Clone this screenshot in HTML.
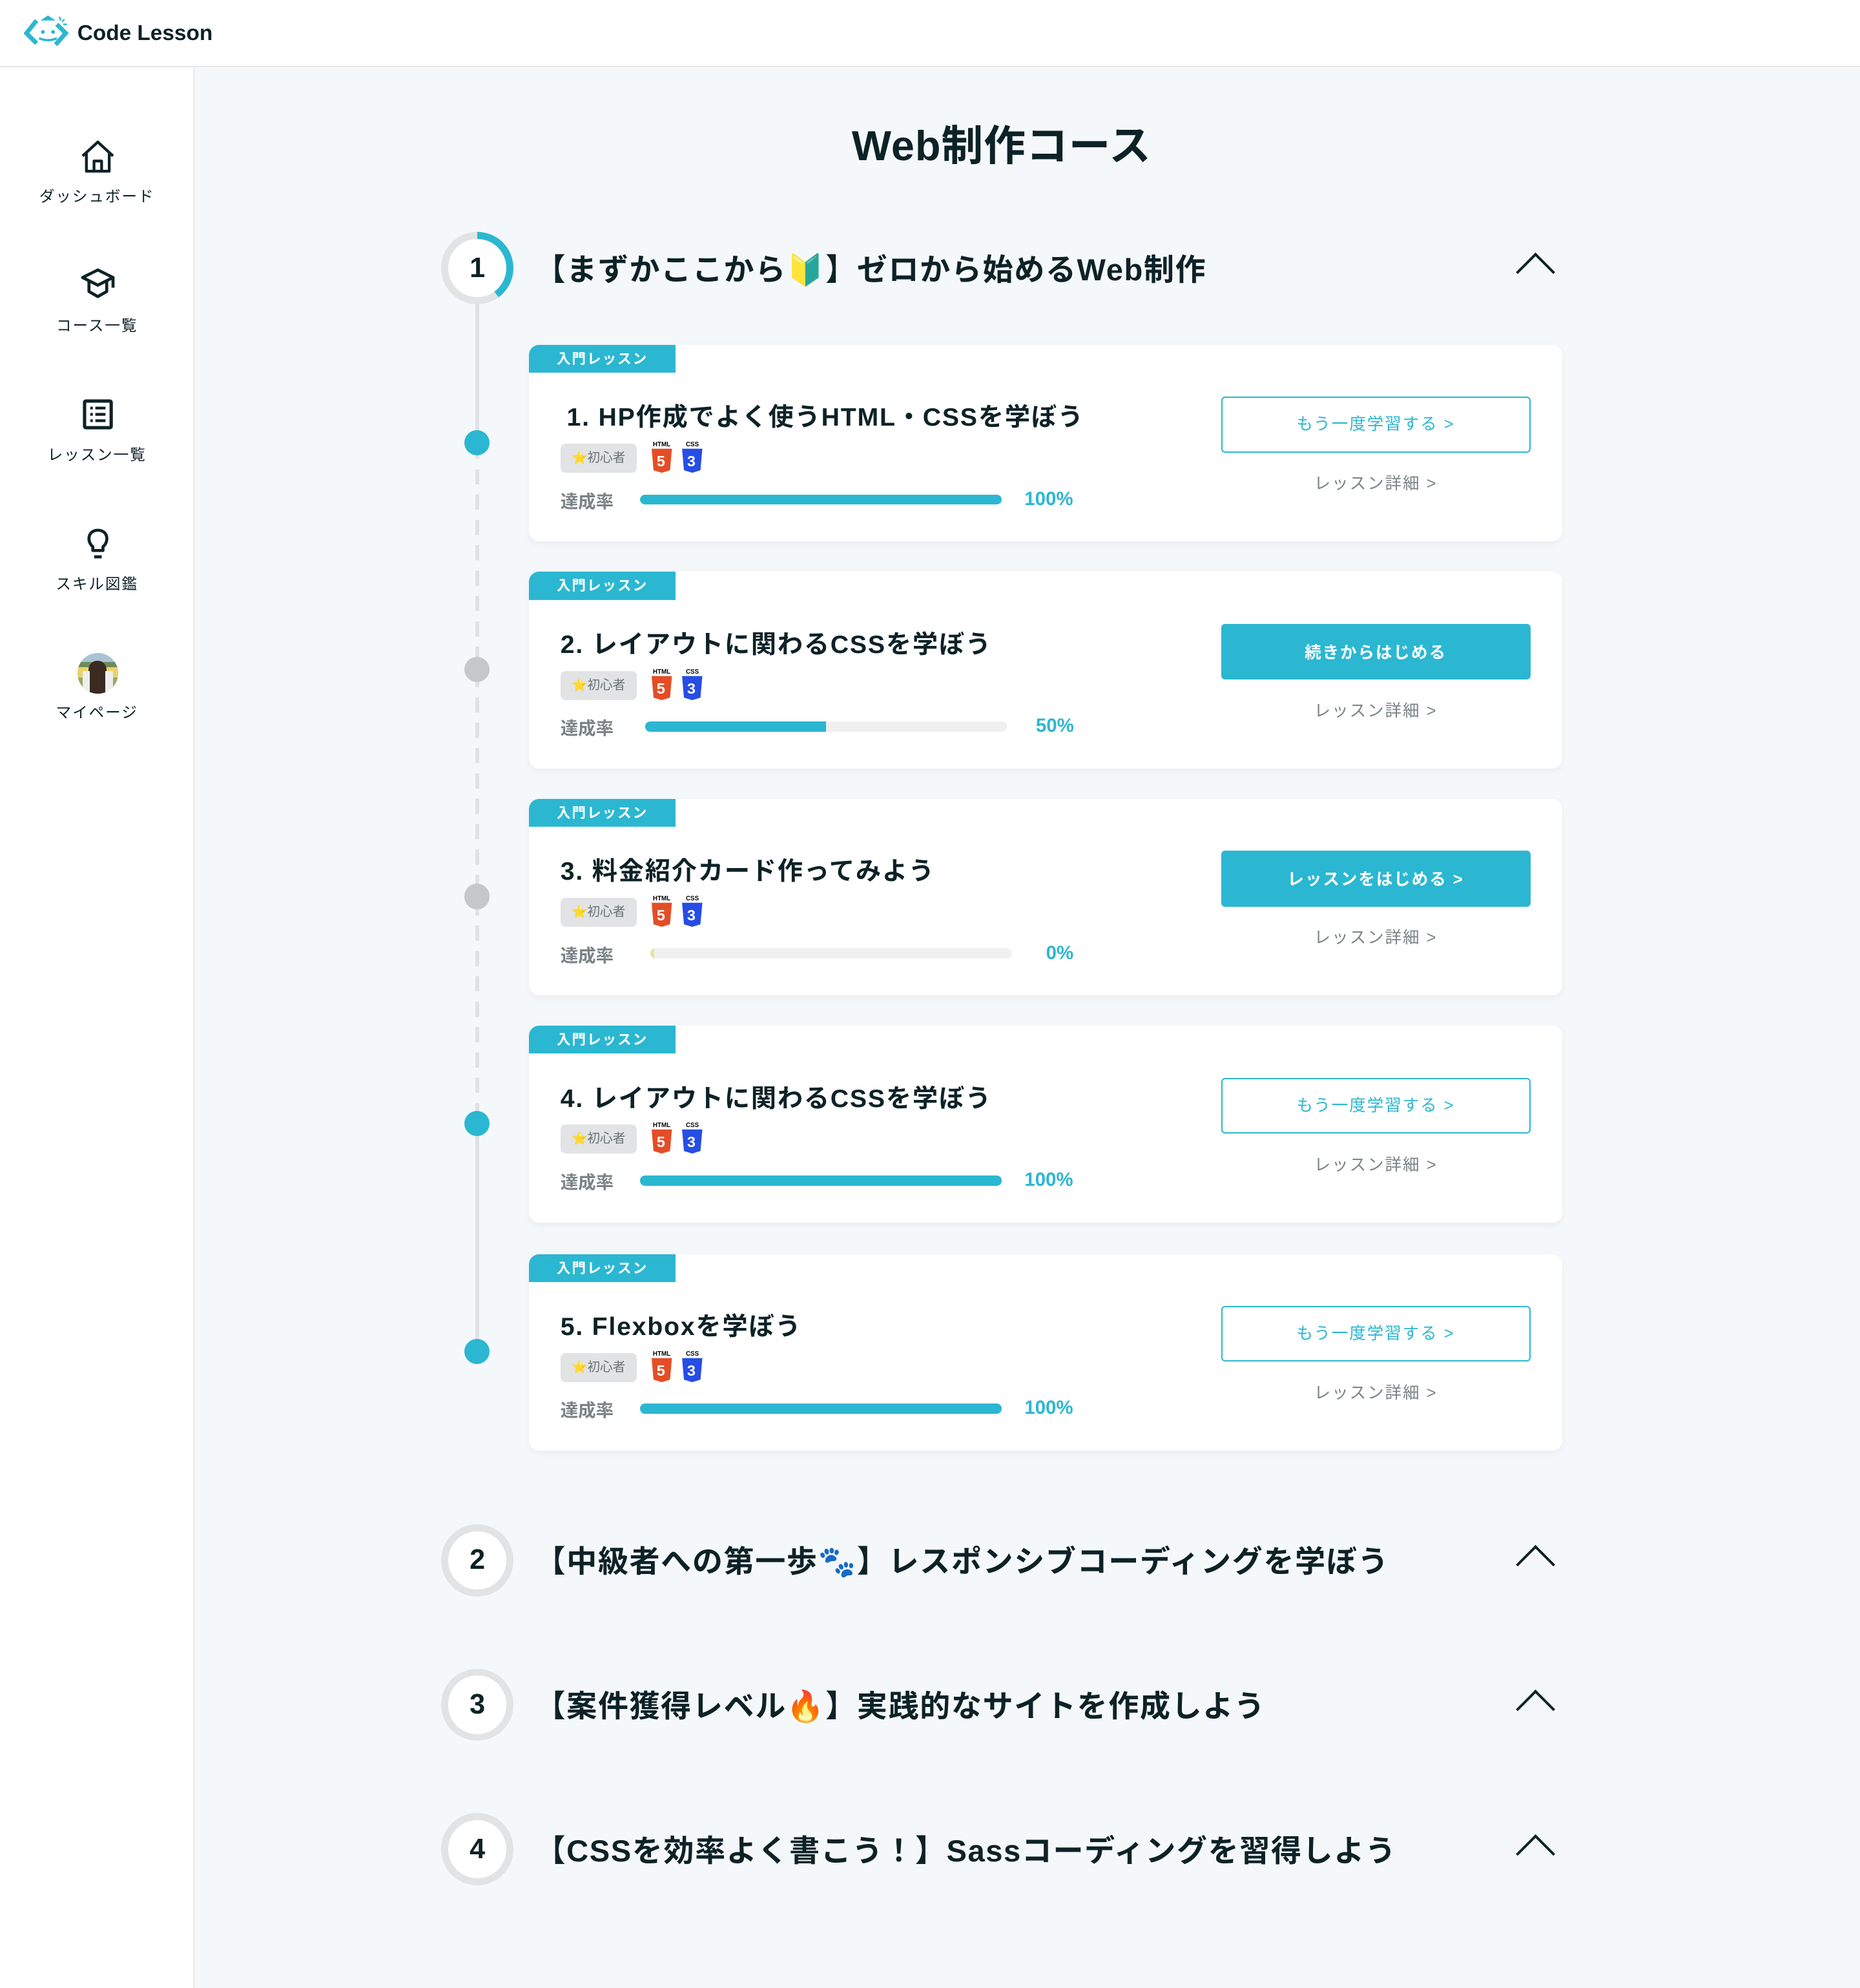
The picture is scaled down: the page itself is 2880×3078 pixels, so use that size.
<!DOCTYPE html>
<html><head><meta charset="utf-8"><style>
*{margin:0;padding:0;box-sizing:border-box}
html,body{width:2880px;height:3078px;overflow:hidden;background:#f5f8fb}
#w{zoom:1.96319;width:1467px;height:1568px;position:relative;font-family:"Liberation Sans","Noto Sans CJK JP",sans-serif;color:#0d2227;background:#f5f8fb}
.a{position:absolute}
.hdr{left:0;top:0;width:1467px;height:53px;background:#fff;border-bottom:1.5px solid #e6e8ea}
.side{left:0;top:53px;width:154px;height:1515px;background:#fff;border-right:2px solid #eceef0}
.nav{position:absolute;left:0;width:153px;text-align:center;font-size:12px;letter-spacing:1px;color:#0d2227}
.ring{width:57px;height:57px;border-radius:50%;background:#e1e3e4;display:flex;align-items:center;justify-content:center}
.ring>div{width:46px;height:46px;border-radius:50%;background:#fff;display:flex;align-items:center;justify-content:center;font-weight:bold;font-size:22px}
.st{font-size:24px;font-weight:bold;letter-spacing:0.8px;white-space:nowrap}
.chev{width:22px;height:22px;border-left:2.5px solid #0d2227;border-top:2.5px solid #0d2227;transform:rotate(45deg)}
.card{left:417px;width:815px;height:155px;background:#fff;border-radius:8px;box-shadow:0 2px 6px rgba(0,0,0,.05)}
.tag{left:0;top:0;width:116px;height:22px;background:#2bb7d1;color:#fff;font-size:11px;font-weight:bold;text-align:center;line-height:22px;border-radius:8px 0 0 0;letter-spacing:1px}
.ct{left:25px;top:41px;font-size:20px;font-weight:bold;letter-spacing:0.9px;white-space:nowrap}
.bdg{left:25px;top:78px;width:60px;height:23px;background:#e1e3e4;border-radius:4px;font-size:10px;color:#6a7274;line-height:23px;text-align:center}
.lb{left:25px;top:112px;font-size:14px;color:#7a8385;font-weight:bold}
.bar{top:118px;height:8px;width:285px;background:#f0f0f0;border-radius:4px;overflow:hidden}
.bar i{display:block;height:8px;background:#2bb7d1}
.pc{top:113px;font-size:15px;color:#2bb7d1;font-weight:bold}
.btn{left:546px;top:41px;width:244px;height:44px;border-radius:3px;font-size:13px;text-align:center;line-height:42px;letter-spacing:1px}
.b1{border:1.5px solid #2bb7d1;color:#2bb7d1;background:#fff}
.b2{background:#2bb7d1;color:#fff;font-weight:bold;line-height:46px}
.det{left:546px;width:244px;top:99px;text-align:center;font-size:13px;color:#7a8385;letter-spacing:1px}
.dot{width:20px;height:20px;border-radius:50%;left:366px}
</style></head><body><div id="w">
<div class="a hdr"></div>
<svg class="a" style="left:19px;top:10px" width="38" height="32" viewBox="0 0 38 32">
<path d="M10 6 L2 16 L10 24" fill="none" stroke="#2bb7d1" stroke-width="3.5"/>
<path d="M26 9 L33 16 L25 25" fill="none" stroke="#2bb7d1" stroke-width="3.5"/>
<path d="M13 6 L19 2 L25 6 Z" fill="#2bb7d1"/>
<circle cx="15" cy="15" r="1.5" fill="#2bb7d1"/><circle cx="23" cy="15" r="1.5" fill="#2bb7d1"/>
<path d="M12 20 Q19 23 26 20" fill="none" stroke="#2bb7d1" stroke-width="1.8"/>
<path d="M28 3 L29 6 M32 5 L30 7 M34 9 L31 9" stroke="#2bb7d1" stroke-width="1.2"/>
</svg>
<div class="a" style="left:61px;top:17px;font-size:17px;font-weight:bold">Code Lesson</div>
<div class="a side"></div>
<svg class="a" style="left:62px;top:109px" width="30" height="30" viewBox="0 0 30 30"><path d="M3 14 L15 3 L27 14 M6 12 V26 H24 V12 M12 26 V18 H18 V26" fill="none" stroke="#0d2227" stroke-width="2.2" stroke-linejoin="round"/></svg>
<div class="nav" style="top:145px">ダッシュボード</div>
<svg class="a" style="left:63px;top:211px" width="28" height="26" viewBox="0 0 28 26"><path d="M2 8 L14 2 L26 8 L14 14 Z M7 11 V19 L14 23 L21 19 V11 M26 8 V16" fill="none" stroke="#0d2227" stroke-width="2.4" stroke-linejoin="round"/></svg>
<div class="nav" style="top:247px">コース一覧</div>
<svg class="a" style="left:65px;top:315px" width="24" height="24" viewBox="0 0 24 24"><rect x="1.5" y="1.5" width="21" height="21" rx="1" fill="none" stroke="#0d2227" stroke-width="2.6"/><path d="M6 7h2M10 7h8M6 12h2M10 12h8M6 17h2M10 17h8" stroke="#0d2227" stroke-width="2.2"/></svg>
<div class="nav" style="top:349px">レッスン一覧</div>
<svg class="a" style="left:66px;top:416px" width="22" height="26" viewBox="0 0 22 26"><path d="M7 18 V15 C2 11 3 2 11 2 C19 2 20 11 15 15 V18 Z" fill="none" stroke="#0d2227" stroke-width="2.4" stroke-linejoin="round"/><path d="M8 23 H14" stroke="#0d2227" stroke-width="2.4"/></svg>
<div class="nav" style="top:451px">スキル図鑑</div>
<div class="a" style="left:61px;top:515px;width:32px;height:32px;border-radius:50%;overflow:hidden;background:linear-gradient(#a9c3d3 0 22%,#6e8a5a 22% 35%,#e8d36a 35% 60%,#9aa86a 60%)"><div class="a" style="left:9px;top:6px;width:14px;height:26px;border-radius:7px 7px 2px 2px;background:#3a2a20"></div><div class="a" style="left:4px;top:14px;width:6px;height:18px;background:#eee"></div><div class="a" style="left:22px;top:14px;width:6px;height:18px;background:#eee"></div></div>
<div class="nav" style="top:552px">マイページ</div>

<div class="a" style="left:0;width:1580px;top:88px;text-align:center;font-size:33px;font-weight:bold;letter-spacing:0.5px">Web制作コース</div>

<div class="a" style="left:375px;top:236px;width:3px;height:114px;background:#dfe1e2"></div>
<div class="a" style="left:375px;top:350px;width:3px;height:536px;background:repeating-linear-gradient(#dfe1e2 0 12px,transparent 12px 20px)"></div>
<div class="a" style="left:375px;top:886px;width:3px;height:180px;background:#dfe1e2"></div>
<div class="a dot" style="top:339px;background:#2bb7d1"></div>
<div class="a dot" style="top:518px;background:#c5c8c9"></div>
<div class="a dot" style="top:697px;background:#c5c8c9"></div>
<div class="a dot" style="top:876px;background:#2bb7d1"></div>
<div class="a dot" style="top:1056px;background:#2bb7d1"></div>

<div class="a ring" style="left:348px;top:183px;background:conic-gradient(#2bb7d1 0 40%,#e1e3e4 40%)"><div>1</div></div>
<div class="a st" style="left:422px;top:193px">【まずかここから🔰】ゼロから始めるWeb制作</div>
<div class="a chev" style="left:1200px;top:204px"></div>

<div class="a card" style="top:272px"><div class="a tag">入門レッスン</div><div class="a ct" style="left:30px">1. HP作成でよく使うHTML・CSSを学ぼう</div><div class="a bdg">⭐初心者</div>
<svg class="a" style="left:96px;top:75px" width="46" height="28"><text x="2" y="5" font-size="5" font-weight="bold" font-family="Liberation Sans">HTML</text><path d="M1 7h16l-1.5 17-6.5 2-6.5-2z" fill="#e44d26"/><text x="5" y="21" font-size="12" font-weight="bold" fill="#fff" font-family="Liberation Sans">5</text><text x="28" y="5" font-size="5" font-weight="bold" font-family="Liberation Sans">CSS</text><path d="M25 7h16l-1.5 17-6.5 2-6.5-2z" fill="#264de4"/><text x="29" y="21" font-size="12" font-weight="bold" fill="#fff" font-family="Liberation Sans">3</text></svg>
<div class="a lb">達成率</div><div class="a bar" style="left:88px"><i style="width:100%"></i></div><div class="a pc" style="left:391px">100%</div>
<div class="a btn b1">もう一度学習する ></div><div class="a det">レッスン詳細 ></div></div>

<div class="a card" style="top:451px"><div class="a tag">入門レッスン</div><div class="a ct">2. レイアウトに関わるCSSを学ぼう</div><div class="a bdg">⭐初心者</div>
<svg class="a" style="left:96px;top:75px" width="46" height="28"><text x="2" y="5" font-size="5" font-weight="bold" font-family="Liberation Sans">HTML</text><path d="M1 7h16l-1.5 17-6.5 2-6.5-2z" fill="#e44d26"/><text x="5" y="21" font-size="12" font-weight="bold" fill="#fff" font-family="Liberation Sans">5</text><text x="28" y="5" font-size="5" font-weight="bold" font-family="Liberation Sans">CSS</text><path d="M25 7h16l-1.5 17-6.5 2-6.5-2z" fill="#264de4"/><text x="29" y="21" font-size="12" font-weight="bold" fill="#fff" font-family="Liberation Sans">3</text></svg>
<div class="a lb">達成率</div><div class="a bar" style="left:92px"><i style="width:50%"></i></div><div class="a pc" style="left:400px">50%</div>
<div class="a btn b2">続きからはじめる</div><div class="a det">レッスン詳細 ></div></div>

<div class="a card" style="top:630px"><div class="a tag">入門レッスン</div><div class="a ct">3. 料金紹介カード作ってみよう</div><div class="a bdg">⭐初心者</div>
<svg class="a" style="left:96px;top:75px" width="46" height="28"><text x="2" y="5" font-size="5" font-weight="bold" font-family="Liberation Sans">HTML</text><path d="M1 7h16l-1.5 17-6.5 2-6.5-2z" fill="#e44d26"/><text x="5" y="21" font-size="12" font-weight="bold" fill="#fff" font-family="Liberation Sans">5</text><text x="28" y="5" font-size="5" font-weight="bold" font-family="Liberation Sans">CSS</text><path d="M25 7h16l-1.5 17-6.5 2-6.5-2z" fill="#264de4"/><text x="29" y="21" font-size="12" font-weight="bold" fill="#fff" font-family="Liberation Sans">3</text></svg>
<div class="a lb">達成率</div><div class="a bar" style="left:96px"><i style="width:1%;background:#e8e2a0"></i></div><div class="a pc" style="left:408px">0%</div>
<div class="a btn b2">レッスンをはじめる ></div><div class="a det">レッスン詳細 ></div></div>

<div class="a card" style="top:809px"><div class="a tag">入門レッスン</div><div class="a ct">4. レイアウトに関わるCSSを学ぼう</div><div class="a bdg">⭐初心者</div>
<svg class="a" style="left:96px;top:75px" width="46" height="28"><text x="2" y="5" font-size="5" font-weight="bold" font-family="Liberation Sans">HTML</text><path d="M1 7h16l-1.5 17-6.5 2-6.5-2z" fill="#e44d26"/><text x="5" y="21" font-size="12" font-weight="bold" fill="#fff" font-family="Liberation Sans">5</text><text x="28" y="5" font-size="5" font-weight="bold" font-family="Liberation Sans">CSS</text><path d="M25 7h16l-1.5 17-6.5 2-6.5-2z" fill="#264de4"/><text x="29" y="21" font-size="12" font-weight="bold" fill="#fff" font-family="Liberation Sans">3</text></svg>
<div class="a lb">達成率</div><div class="a bar" style="left:88px"><i style="width:100%"></i></div><div class="a pc" style="left:391px">100%</div>
<div class="a btn b1">もう一度学習する ></div><div class="a det">レッスン詳細 ></div></div>

<div class="a card" style="top:989px"><div class="a tag">入門レッスン</div><div class="a ct">5. Flexboxを学ぼう</div><div class="a bdg">⭐初心者</div>
<svg class="a" style="left:96px;top:75px" width="46" height="28"><text x="2" y="5" font-size="5" font-weight="bold" font-family="Liberation Sans">HTML</text><path d="M1 7h16l-1.5 17-6.5 2-6.5-2z" fill="#e44d26"/><text x="5" y="21" font-size="12" font-weight="bold" fill="#fff" font-family="Liberation Sans">5</text><text x="28" y="5" font-size="5" font-weight="bold" font-family="Liberation Sans">CSS</text><path d="M25 7h16l-1.5 17-6.5 2-6.5-2z" fill="#264de4"/><text x="29" y="21" font-size="12" font-weight="bold" fill="#fff" font-family="Liberation Sans">3</text></svg>
<div class="a lb">達成率</div><div class="a bar" style="left:88px"><i style="width:100%"></i></div><div class="a pc" style="left:391px">100%</div>
<div class="a btn b1">もう一度学習する ></div><div class="a det">レッスン詳細 ></div></div>

<div class="a ring" style="left:348px;top:1202px"><div>2</div></div>
<div class="a st" style="left:422px;top:1212px">【中級者への第一歩🐾】レスポンシブコーディングを学ぼう</div>
<div class="a chev" style="left:1200px;top:1223px"></div>
<div class="a ring" style="left:348px;top:1316px"><div>3</div></div>
<div class="a st" style="left:422px;top:1326px">【案件獲得レベル🔥】実践的なサイトを作成しよう</div>
<div class="a chev" style="left:1200px;top:1337px"></div>
<div class="a ring" style="left:348px;top:1430px"><div>4</div></div>
<div class="a st" style="left:422px;top:1440px">【CSSを効率よく書こう！】Sassコーディングを習得しよう</div>
<div class="a chev" style="left:1200px;top:1451px"></div>
</div></body></html>
